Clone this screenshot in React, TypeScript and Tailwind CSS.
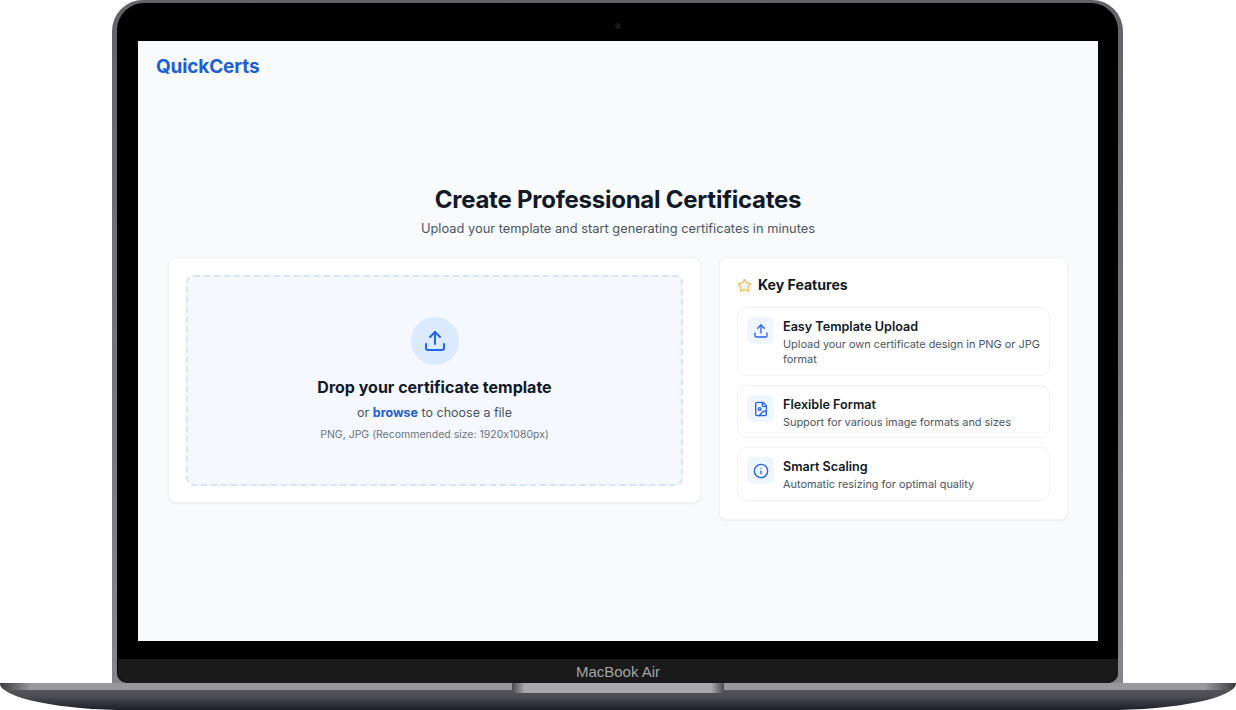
import { FileImage, Info, Star, Upload } from "lucide-react";

const features = [
  {
    title: "Easy Template Upload",
    desc: "Upload your own certificate design in PNG or JPG format",
    icon: Upload,
    box: "h-[69px]",
  },
  {
    title: "Flexible Format",
    desc: "Support for various image formats and sizes",
    icon: FileImage,
    box: "h-[53px]",
  },
  {
    title: "Smart Scaling",
    desc: "Automatic resizing for optimal quality",
    icon: Info,
    box: "h-[53.5px]",
  },
];

const App = () => {
  return (
    <div className="w-[1236px] h-[710px] overflow-hidden bg-white flex flex-col items-center font-['Inter','Liberation_Sans',sans-serif] [font-feature-settings:'calt'_0]">
      {/* Lid */}
      <div className="w-[1011px] h-[683px] mr-[1px] shrink-0 rounded-t-[31px] bg-gradient-to-b from-[#626267] to-[#85858a] px-[5px] pt-[3px]">
        <div className="h-full rounded-t-[27px] rounded-b-[10px] bg-black flex flex-col items-center pt-[38px] pl-[1px]">
          <div className="relative w-[960px] h-[600px] shrink-0 bg-[#f8fafc] px-[18px] pt-[14px]">
            <div className="absolute left-[477px] top-[-18px] w-[6px] h-[6px] rounded-full bg-[#17171a]" />
            <div className="text-[19px] leading-[24px] font-bold tracking-[-0.15px] text-[#1d5fd6]">QuickCerts</div>

            <div className="mt-[105px] text-center text-[24px] leading-[32px] font-bold tracking-[-0.24px] text-[#111827]">
              Create Professional Certificates
            </div>
            <div className="mt-[3px] text-center text-[12.85px] leading-[20px] text-[#4b5563]">
              Upload your template and start generating certificates in minutes
            </div>

            <div className="mt-[18px] mx-[12px] flex items-start gap-[18px]">
              {/* Upload card */}
              <div className="w-[533px] h-[246px] shrink-0 rounded-[8px] bg-white border border-[#f0f2f5] shadow-[0_1px_2px_rgba(0,0,0,0.05)] p-[17px]">
                <div className="h-[211px] rounded-[8px] border-2 border-dashed border-[#d4e5fd] bg-[#f5f9ff] flex flex-col items-center pt-[40px]">
                  <div className="w-[48px] h-[48px] rounded-full bg-[#dbeafe] flex items-center justify-center">
                    <Upload size={24} strokeWidth={2} className="text-[#2563eb]" />
                  </div>
                  <div className="mt-[10px] text-[16px] leading-[24px] font-bold text-[#111827]">
                    Drop your certificate template
                  </div>
                  <div className="mt-[4px] text-[12.5px] leading-[20px] text-[#4b5563]">
                    or <span className="font-bold text-[#1d5fd6]">browse</span> to choose a file
                  </div>
                  <div className="mt-[3px] text-[10.5px] leading-[18px] text-[#6b7280]">
                    PNG, JPG (Recommended size: 1920x1080px)
                  </div>
                </div>
              </div>

              {/* Key features */}
              <div className="w-[349px] h-[263px] shrink-0 rounded-[8px] bg-white border border-[#f0f2f5] shadow-[0_1px_2px_rgba(0,0,0,0.05)] px-[17px] pt-[17px]">
                <div className="flex items-center gap-[6px] h-[20px]">
                  <Star size={15} strokeWidth={2} className="text-[#f7b75c]" />
                  <span className="text-[14.1px] font-bold text-[#111827]">Key Features</span>
                </div>
                <div className="mt-[12px] flex flex-col gap-[9px]">
                  {features.map((f) => (
                    <div
                      key={f.title}
                      className={`${f.box} rounded-[10px] border border-[#f0f2f5] flex items-start gap-[9px] pl-[9px] pr-[8px] pt-[9px]`}
                    >
                      <div className="w-[27px] h-[27px] shrink-0 rounded-[6px] bg-[#eff6ff] flex items-center justify-center">
                        <f.icon size={16} strokeWidth={2} className="text-[#2563eb]" />
                      </div>
                      <div className="pt-px">
                        <div className="text-[12.6px] leading-[18px] font-semibold text-[#111827]">{f.title}</div>
                        <div className="mt-px text-[10.9px] leading-[15px] text-[#4b5563]">{f.desc}</div>
                      </div>
                    </div>
                  ))}
                </div>
              </div>
            </div>
          </div>

          {/* Chin */}
          <div className="mt-[18px] w-[1000px] h-[24px] shrink-0 rounded-b-[10px] bg-[#1a1a1a] flex items-center justify-center pt-[2px] text-[15px] text-[#a3a3a6] font-['Liberation_Sans',sans-serif]">
            MacBook Air
          </div>
        </div>
      </div>

      {/* Base */}
      <div className="relative w-[1236px] h-[27px] shrink-0 overflow-hidden rounded-b-[130px_27px] bg-gradient-to-b from-[#5c5c62] via-[#4c4c52] to-[#1e1e28]">
        <div className="h-[7px] bg-[linear-gradient(90deg,#3c3c40,#98989c_2.5%,#98989c_97.5%,#3c3c40)]" />
        <div className="absolute left-[512px] top-0 w-[212px] h-[10px] rounded-b-[3px] bg-[linear-gradient(90deg,#4a4a4e,#a9a9ad_6%,#a9a9ad_94%,#4a4a4e)]" />
      </div>
    </div>
  );
};

export default App;
